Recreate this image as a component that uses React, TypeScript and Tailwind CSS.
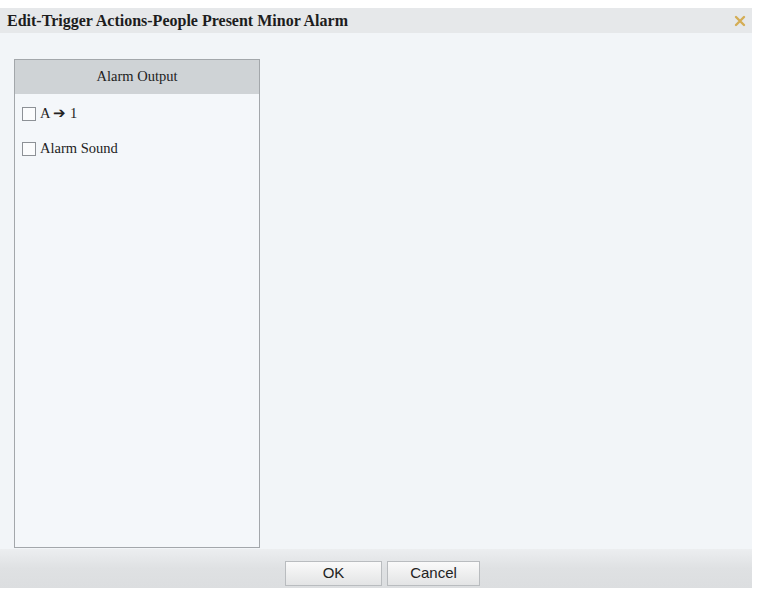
import React from "react"

const serif = "font-['Liberation_Serif','Times_New_Roman',serif]"
const sans = "font-['Liberation_Sans',Arial,sans-serif]"

function Row({ label }: { label: string }) {
  return (
    <div className="flex h-[35px] items-center pl-[7px]">
      <span className="h-[14px] w-[14px] border border-[#8d9196] bg-[#fbfcfd]" />
      <span className={`ml-[4px] text-[14.5px] text-[#222] ${serif}`}>{label}</span>
    </div>
  )
}

export default function App() {
  return (
    <div className="h-[590px] w-[757px] bg-white pt-[8px]">
      <div className="flex h-[580px] w-[752px] flex-col">
        <div className="flex h-[25px] items-center justify-between bg-[#e6e8ea] pl-[7px] pr-[6px]">
          <span className={`text-[16px] font-bold text-[#1d1d1d] ${serif}`}>
            Edit-Trigger Actions-People Present Minor Alarm
          </span>
          <svg width="12" height="12" viewBox="0 0 12 12" className="mt-[1px]">
            <path d="M2 2 L10 10 M10 2 L2 10" stroke="#d4ad55" strokeWidth="2.4" strokeLinecap="round" />
          </svg>
        </div>
        <div className="flex-1 bg-[#f2f5f8] pl-[14px] pt-[26px] pb-[1px]">
          <div className="flex h-[489px] w-[246px] flex-col border border-[#a3a7ab] bg-[#f4f7fa]">
            <div className={`flex h-[34px] items-center justify-center bg-[#cfd3d6] text-[14.5px] text-[#222] ${serif}`}>
              Alarm Output
            </div>
            <div className="pt-[2px]">
              <Row label="A ➔ 1" />
              <Row label="Alarm Sound" />
            </div>
          </div>
        </div>
        <div className="flex h-[39px] justify-center gap-[5px] bg-gradient-to-b from-[#eceef0] via-[#dfe1e3] to-[#dcdee0] pl-[13px] pt-[12px]">
          <button className={`h-[25px] w-[97px] border border-[#b9bcbf] bg-gradient-to-b from-[#fafafa] to-[#e3e4e5] text-[15px] text-[#222] ${sans}`}>
            OK
          </button>
          <button className={`h-[25px] w-[93px] border border-[#b9bcbf] bg-gradient-to-b from-[#fafafa] to-[#e3e4e5] text-[15px] text-[#222] ${sans}`}>
            Cancel
          </button>
        </div>
      </div>
    </div>
  )
}
